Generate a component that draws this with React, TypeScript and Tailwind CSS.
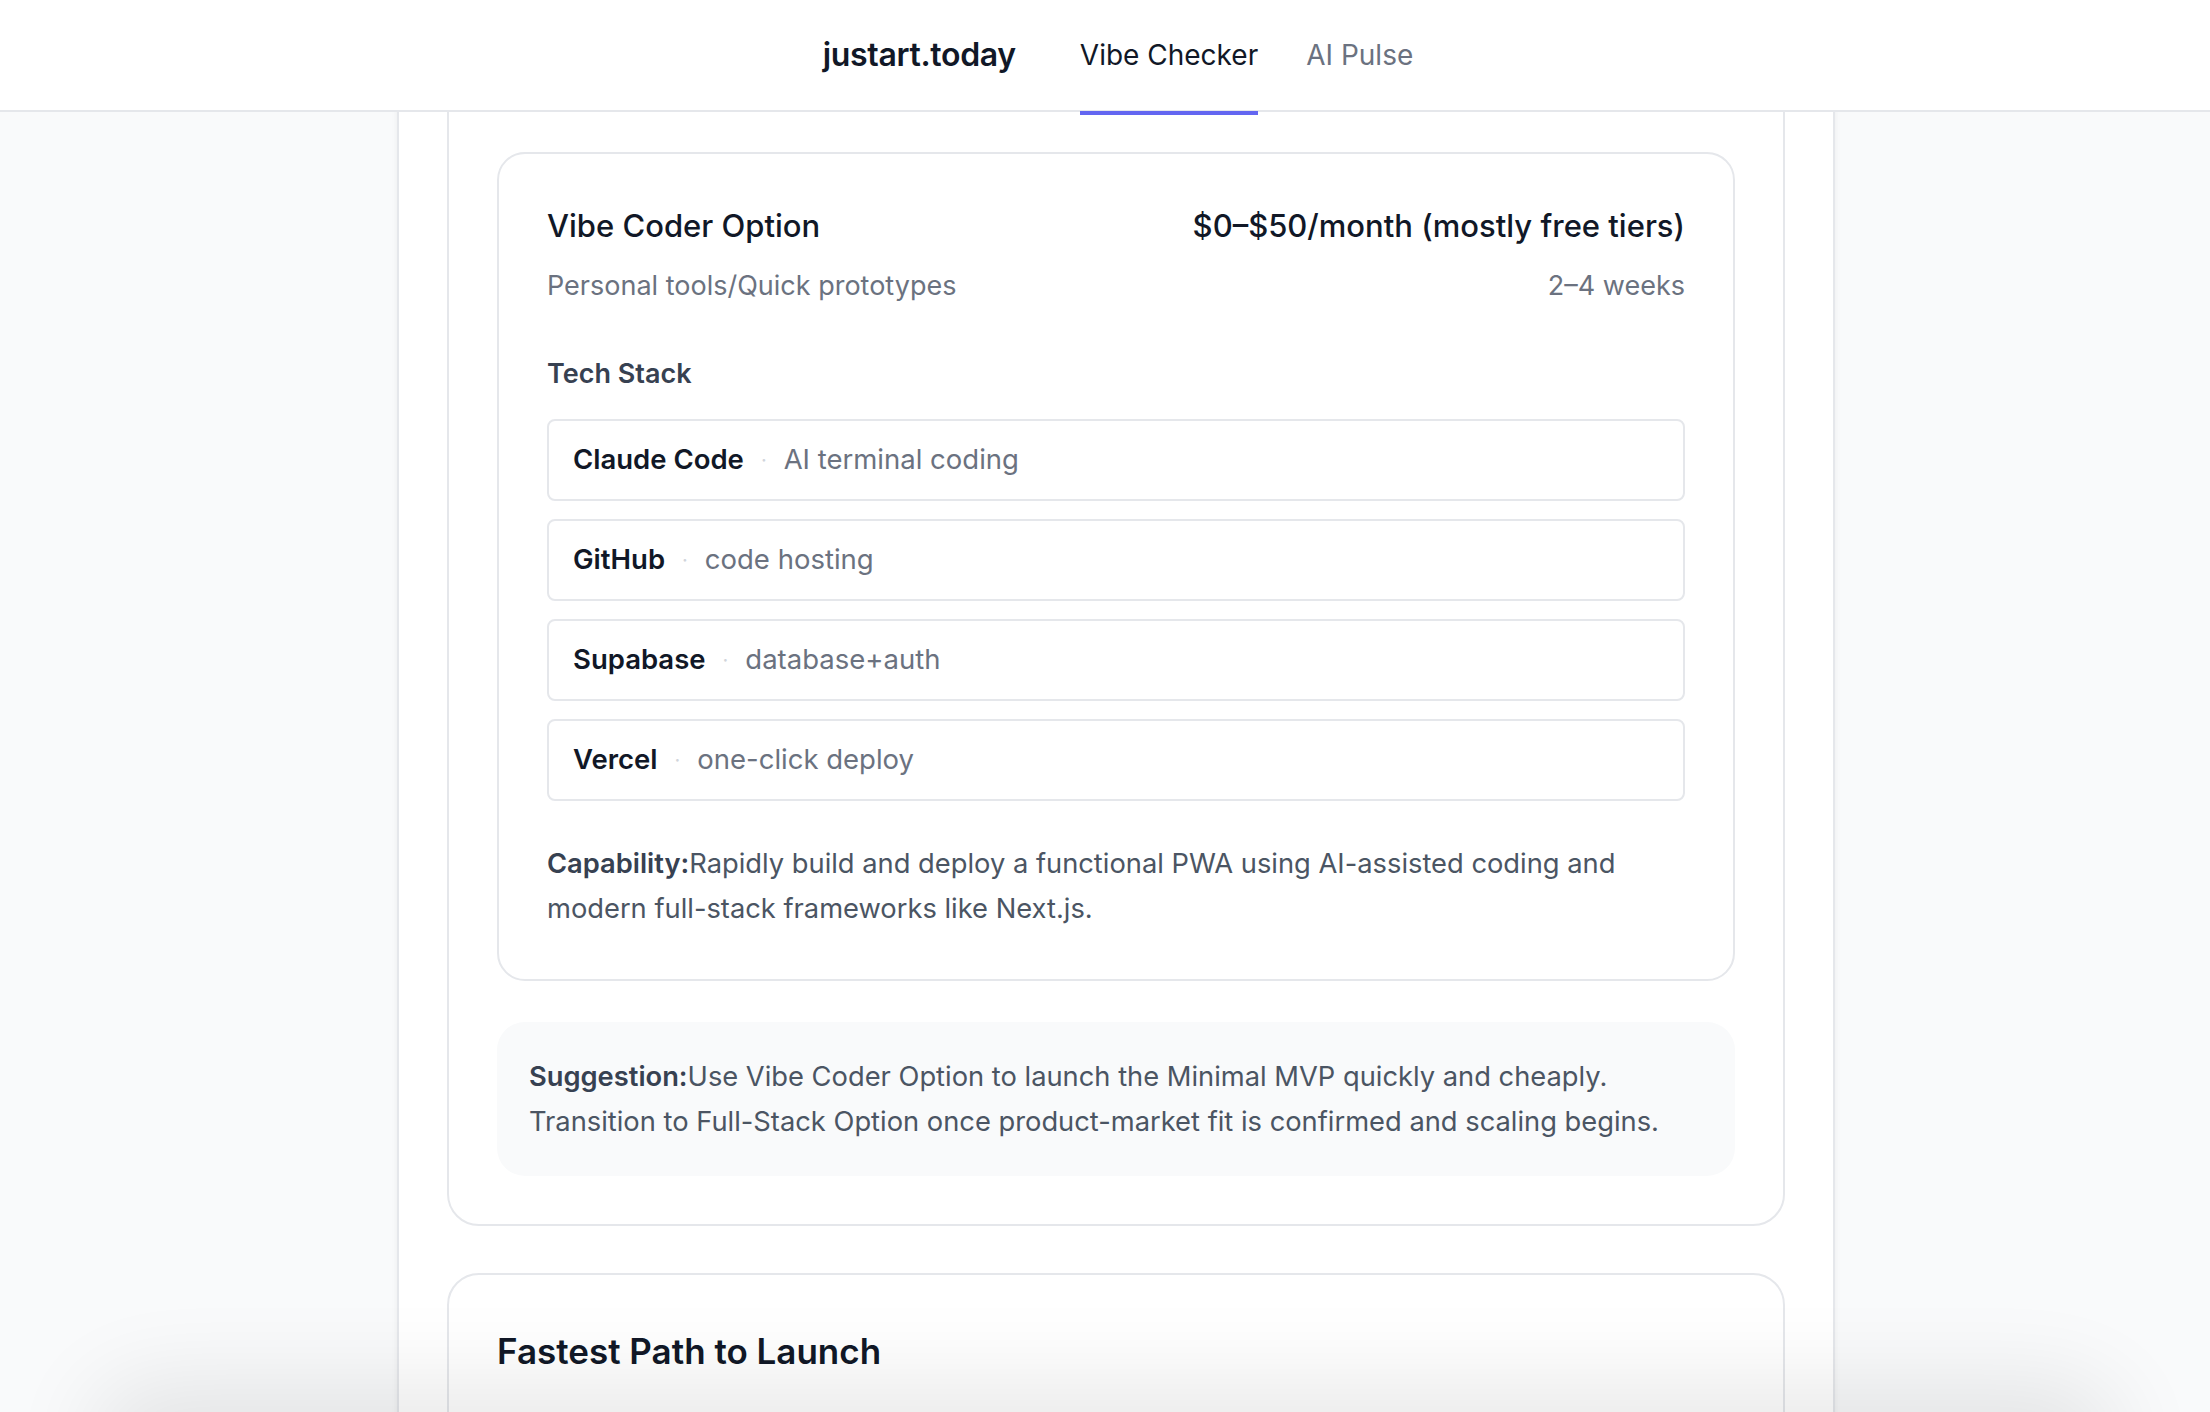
const stack = [
  { name: "Claude Code", desc: "AI terminal coding" },
  { name: "GitHub", desc: "code hosting" },
  { name: "Supabase", desc: "database+auth" },
  { name: "Vercel", desc: "one-click deploy" },
];

export default function App() {
  return (
    <div className="relative h-screen overflow-hidden bg-[#f9fafb] font-['Inter','Liberation_Sans',sans-serif] text-[#111827]">
      <header className="relative z-10 flex h-[112px] items-center justify-center border-b-2 border-[#e5e7eb] bg-white pl-[26px]">
        <div className="text-[32px] font-semibold tracking-[-0.01em] text-[#111827]">justart.today</div>
        <nav className="ml-[64px] flex h-full items-center gap-[48px] text-[28px]">
          <div className="relative flex h-full items-center text-[#111827]">
            Vibe Checker
            <span className="absolute bottom-[-5px] left-0 right-0 h-[4px] bg-[#6366f1]" />
          </div>
          <div className="text-[#6b7280]">AI Pulse</div>
        </nav>
      </header>

      <div className="pl-[22px]">
        <main className="mx-auto w-[1438px] border-x-2 border-[#e5e7eb] bg-white px-[48px] pb-[200px] shadow-[0_0_6px_rgba(0,0,0,0.06)]">
          {/* outer card, scrolled so its top sits under the header */}
          <section className="-mt-[60px] rounded-[32px] border-2 border-[#e5e7eb] px-[48px] pb-[48px] pt-[98px]">
            <div className="rounded-[28px] border-2 border-[#e5e7eb] px-[48px] pb-[48px] pt-[52px]">
              <div className="flex items-center justify-between text-[31px] font-medium leading-[40px] text-[#111827]">
                <span>Vibe Coder Option</span>
                <span>$0–$50/month (mostly free tiers)</span>
              </div>
              <div className="mt-[22px] flex items-center justify-between text-[27px] leading-[36px] text-[#6b7280]">
                <span>Personal tools/Quick prototypes</span>
                <span>2–4 weeks</span>
              </div>

              <h3 className="mt-[49px] text-[27px] font-semibold leading-[42px] text-[#374151]">Tech Stack</h3>
              <div className="mt-[24px] flex flex-col gap-[18px]">
                {stack.map((s) => (
                  <div
                    key={s.name}
                    className="flex h-[82px] items-center rounded-[8px] border-2 border-[#e5e7eb] px-[24px] text-[27.5px]"
                  >
                    <span className="font-semibold text-[#111827]">{s.name}</span>
                    <span className="mx-[17px] text-[20px] text-[#d1d5db]">·</span>
                    <span className="text-[#6b7280]">{s.desc}</span>
                  </div>
                ))}
              </div>

              <p className="mt-[40px] text-[27.3px] leading-[45px] text-[#4b5563]">
                <span className="font-semibold text-[#374151]">Capability:</span>Rapidly build and deploy a functional PWA
                using AI-assisted coding and modern full-stack frameworks like Next.js.
              </p>
            </div>

            <div className="mt-[41px] rounded-[28px] bg-[#f9fafb] px-[32px] py-[32px] text-[27.3px] leading-[45px] text-[#4b5563]">
              <span className="font-semibold text-[#374151]">Suggestion:</span>Use Vibe Coder Option to launch the Minimal
              MVP quickly and cheaply. Transition to Full-Stack Option once product-market fit is confirmed and scaling
              begins.
            </div>
          </section>

          <section className="mt-[47px] rounded-[32px] border-2 border-[#e5e7eb] px-[48px] pb-[48px] pt-[52px]">
            <h2 className="text-[35px] font-semibold leading-[48px] text-[#111827]">Fastest Path to Launch</h2>
            <div className="h-[300px]" />
          </section>
        </main>
      </div>

      {/* soft shadow rising from the bottom edge */}
      <div className="pointer-events-none fixed bottom-[-60px] left-[120px] right-[120px] h-[60px] rounded-[40px] shadow-[0_0_90px_30px_rgba(0,0,0,0.09)]" />
    </div>
  );
}
